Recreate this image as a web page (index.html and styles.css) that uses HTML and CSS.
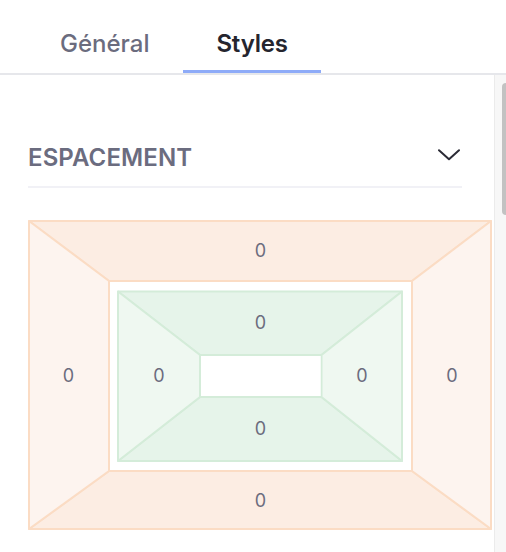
FILE: index.html
```html
<!DOCTYPE html>
<html lang="fr">
<head>
<meta charset="utf-8">
<title>Styles</title>
<link rel="stylesheet" href="styles.css">
</head>
<body>
<div class="panel">
  <div class="tabs">
    <div class="tab">Général</div>
    <div class="tab tab-active">Styles</div>
  </div>
  <div class="body">
    <div class="content">
      <div class="section-head">
        <span class="section-title">ESPACEMENT</span>
        <svg class="chevron" width="22" height="12" viewBox="0 0 22 12"><path d="M1 1.2 L11 10.2 L21 1.2" fill="none" stroke="#2b2b36" stroke-width="2" stroke-linecap="round" stroke-linejoin="round"/></svg>
      </div>
      <div class="box-model">
        <svg class="box-art" width="464" height="310" viewBox="0 0 464 310">
          <g stroke="#fbdcc4" stroke-width="2" stroke-linejoin="round">
            <polygon points="1,1 463,1 384,61 81,61" fill="#fcede3"/>
            <polygon points="1,309 463,309 384,251 81,251" fill="#fcede3"/>
            <polygon points="1,1 81,61 81,251 1,309" fill="#fdf4ef"/>
            <polygon points="463,1 384,61 384,251 463,309" fill="#fdf4ef"/>
          </g>
          <rect x="82" y="62" width="301" height="188" fill="#ffffff"/>
          <g stroke="#d4ecd9" stroke-width="2" stroke-linejoin="round">
            <polygon points="90,71.5 374,71.5 293.5,135 172,135" fill="#e6f4ea"/>
            <polygon points="90,241 374,241 293.5,177 172,177" fill="#e6f4ea"/>
            <polygon points="90,71.5 172,135 172,177 90,241" fill="#eff8f1"/>
            <polygon points="374,71.5 293.5,135 293.5,177 374,241" fill="#eff8f1"/>
          </g>
          <rect x="173" y="136" width="119.5" height="40" fill="#ffffff"/>
        </svg>
        <div class="val m-top">0</div>
        <div class="val m-left">0</div>
        <div class="m-center">
          <div class="pad-box">
            <div class="val p-top">0</div>
            <div class="val p-left">0</div>
            <div class="p-center"></div>
            <div class="val p-right">0</div>
            <div class="val p-bottom">0</div>
          </div>
        </div>
        <div class="val m-right">0</div>
        <div class="val m-bottom">0</div>
      </div>
    </div>
    <div class="scrollbar"><div class="thumb"></div></div>
  </div>
</div>
</body>
</html>
```

FILE: styles.css
```css
* { box-sizing: border-box; }
html, body {
  margin: 0;
  padding: 0;
  background: #ffffff;
}
body {
  width: 506px;
  height: 552px;
  overflow: hidden;
  font-family: Inter, "Noto Sans", sans-serif;
}
.panel {
  display: flex;
  flex-direction: column;
  height: 552px;
}
.tabs {
  display: flex;
  padding-left: 26px;
  border-bottom: 2px solid #e6e7eb;
  height: 75px;
}
.tab {
  padding: 26px 34px 8px;
  font-size: 24px;
  line-height: 36px;
  font-weight: 500;
  color: #6b6c7e;
  border-bottom: 3px solid transparent;
  height: 73px;
}
.tab-active {
  padding: 26px 33px 8px;
  color: #25252e;
  font-weight: 600;
  letter-spacing: -0.2px;
  border-bottom-color: #8eabf8;
}
.body {
  flex: 1;
  display: flex;
  min-height: 0;
}
.content {
  flex: 1;
  padding-left: 28px;
}
.section-head {
  margin-top: 65px;
  width: 434px;
  display: flex;
  justify-content: space-between;
  align-items: flex-start;
  padding-bottom: 10px;
  border-bottom: 2px solid #f1f1f6;
}
.section-title {
  font-size: 24px;
  line-height: 36px;
  font-weight: 600;
  color: #6b6c7f;
  letter-spacing: 0.1px;
}
.chevron {
  margin-top: 9px;
  margin-right: 2px;
}
.box-model {
  position: relative;
  margin-top: 32px;
  width: 464px;
  height: 310px;
  display: grid;
  grid-template-columns: 81px 1fr 80px;
  grid-template-rows: 61px 190px 59px;
}
.box-art {
  position: absolute;
  left: 0;
  top: 0;
}
.val {
  position: relative;
  display: flex;
  align-items: center;
  justify-content: center;
  font-size: 18px;
  line-height: 22px;
  color: #6b6c7e;
}
.m-top { grid-column: 2; grid-row: 1; }
.m-left { grid-column: 1; grid-row: 2; }
.m-center { grid-column: 2; grid-row: 2; padding: 10px 9px; position: relative; }
.m-right { grid-column: 3; grid-row: 2; }
.m-bottom { grid-column: 2; grid-row: 3; }
.pad-box {
  height: 170px;
  display: grid;
  grid-template-columns: 82px 1fr 82px;
  grid-template-rows: 64px 42px 64px;
}
.p-top { grid-column: 2; grid-row: 1; }
.p-left { grid-column: 1; grid-row: 2; }
.p-center { grid-column: 2; grid-row: 2; }
.p-right { grid-column: 3; grid-row: 2; }
.p-bottom { grid-column: 2; grid-row: 3; }
.scrollbar {
  width: 12px;
  background: #f7f7f7;
  border-left: 1px solid #ebebeb;
  padding-top: 8px;
  padding-left: 7px;
}
.thumb {
  width: 8px;
  height: 132px;
  background: #c2c2c2;
  border-radius: 4px 0 0 4px;
}
```
